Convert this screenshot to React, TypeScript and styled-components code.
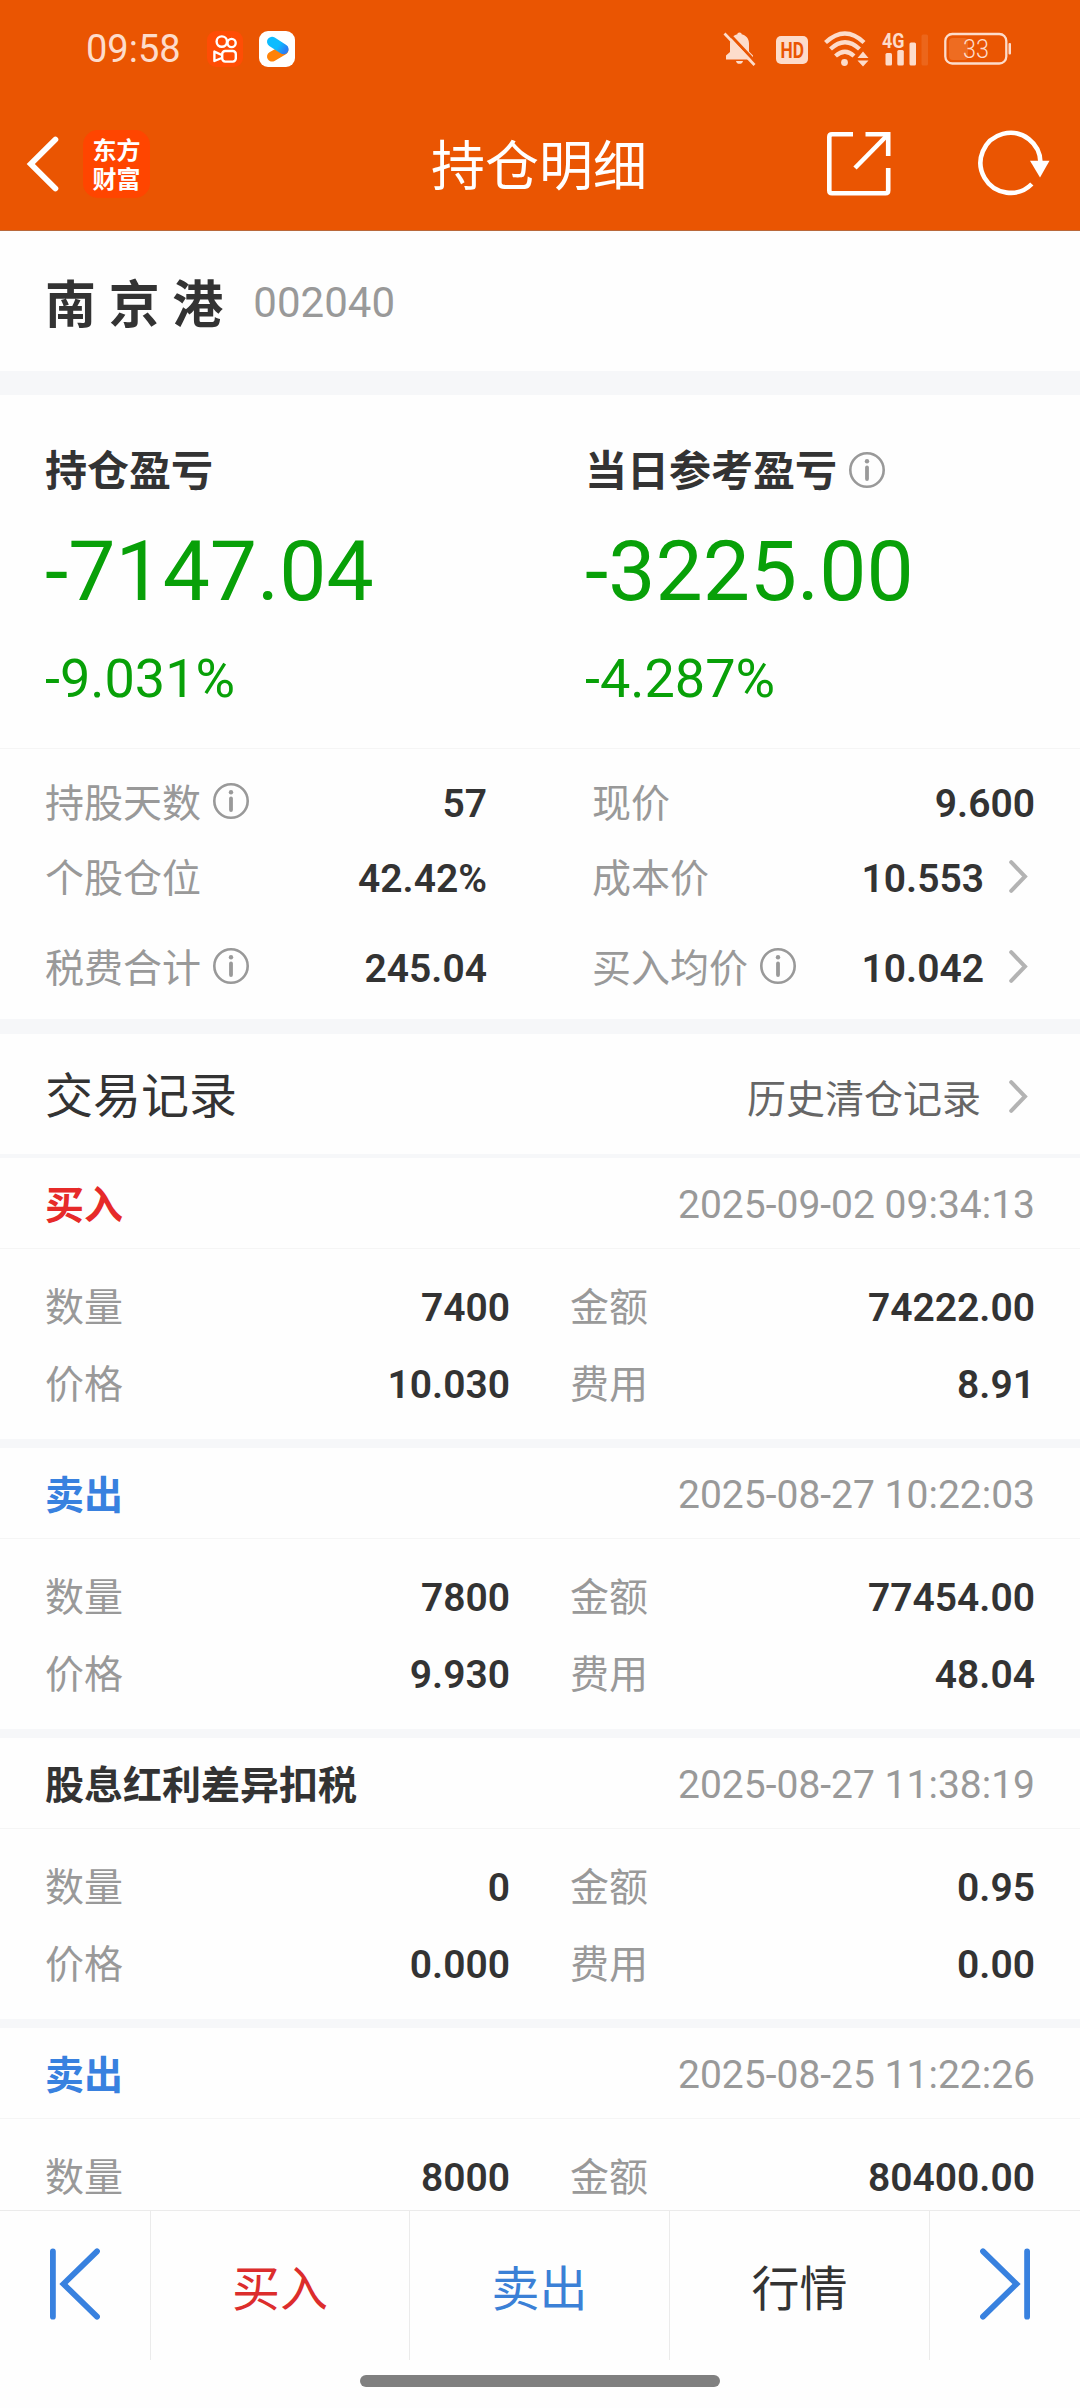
import React from "react";
import styled, { createGlobalStyle } from "styled-components";

const GlobalStyle = createGlobalStyle`
  * { box-sizing: border-box; }
  body { margin: 0; background: #fefefe; }
  svg { display: block; flex: none; overflow: visible; }
`;

const tint = "#fddccb";

const Page = styled.div`
  display: flex;
  flex-direction: column;
  width: 1080px;
  height: 2408px;
  overflow: hidden;
  background: #fefefe;
  color: #333;
  font-family: Roboto, "Noto Sans CJK SC", sans-serif;
  font-size: 39px;
  line-height: 1;
`;

const Header = styled.header`
  flex: none;
  height: 231px;
  background: #ea5502;
  border-bottom: 1px solid #b9683b;
`;

const StatusBar = styled.div`
  display: flex;
  align-items: center;
  justify-content: space-between;
  height: 97px;
  padding: 0 68px 0 86px;
  color: ${tint};
`;

const StatusGroup = styled.div`
  display: flex;
  align-items: center;
`;

const Clock = styled.span`
  width: 121px;
  font-size: 38px;
  line-height: 50px;
  padding-top: 1px;
`;

const AppIcon = styled.span<{ $bg: string }>`
  display: flex;
  width: 36px;
  height: 36px;
  margin-right: 16px;
  border-radius: 9px;
  overflow: hidden;
  background: ${(p) => p.$bg};
`;

const HdBadge = styled.span`
  margin: 2px 16px 0 20px;
`;

const NavBar = styled.nav`
  display: grid;
  grid-template-columns: 1fr auto 1fr;
  align-items: center;
  height: 134px;
  padding: 0 29px 0 27px;
  color: #fff;
`;

const NavSide = styled.div<{ $end?: boolean }>`
  display: flex;
  align-items: center;
  justify-content: ${(p) => (p.$end ? "flex-end" : "flex-start")};
  gap: ${(p) => (p.$end ? 87 : 25)}px;
`;

const BrandLogo = styled.span`
  width: 67px;
  height: 68px;
  padding-top: 4px;
  border-radius: 15px;
  background: #ff4500;
  font: 700 24px/29px "Noto Sans CJK SC", sans-serif;
  text-align: center;
`;

const PageTitle = styled.h1`
  margin: 0;
  padding-top: 8px;
  font-size: 54px;
  font-weight: 400;
  line-height: 70px;
`;

const StockBar = styled.section`
  display: flex;
  flex: none;
  align-items: center;
  height: 140px;
  padding: 4px 45px 0;
`;

const StockName = styled.strong`
  padding-top: 5px;
  font-size: 51px;
  line-height: 70px;
  white-space: pre;
`;

const StockCode = styled.span`
  margin-left: 30px;
  color: #999;
  font-size: 42px;
  line-height: 60px;
`;

const Band = styled.div<{ $h: number }>`
  flex: none;
  height: ${(p) => p.$h}px;
  background: #f6f7f9;
`;

const Summary = styled.section`
  display: grid;
  flex: none;
  grid-template-columns: 540px 1fr;
  height: 354px;
  padding: 47px 45px 0;
  border-bottom: 1px solid #f5f5f5;
`;

const SummaryLabel = styled.div`
  display: flex;
  align-items: center;
  gap: 12px;
  font-size: 42px;
  font-weight: 700;
  line-height: 60px;
`;

const BigFigure = styled.div`
  margin: 20px 0 27px;
  color: #08a008;
  font-size: 84px;
  line-height: 100px;
`;

const Percent = styled.div`
  color: #08a008;
  font-size: 54px;
  line-height: 60px;
`;

const Stats = styled.section`
  flex: none;
  height: 270px;
  padding: 17px 45px 0;
`;

const StatLine = styled.div<{ $gap?: number }>`
  display: grid;
  grid-template-columns: 442px 443px;
  justify-content: space-between;
  height: 75px;
  margin-top: ${(p) => p.$gap ?? 0}px;
`;

const PairLine = styled.div`
  display: grid;
  grid-template-columns: 465px 465px;
  justify-content: space-between;
  height: 77px;
`;

const Cell = styled.div`
  display: flex;
  align-items: center;
`;

const Label = styled.span`
  padding-top: 1px;
  color: #999;
  line-height: 60px;
`;

const Value = styled.strong`
  margin-left: auto;
  font-weight: 600;
  line-height: 60px;
`;

const InfoWrap = styled.span<{ $flush?: boolean }>`
  margin: 0 0 5px ${(p) => (p.$flush ? 0 : 12)}px;
`;

const ChevronWrap = styled.span<{ $wide?: boolean }>`
  margin: ${(p) => (p.$wide ? "1px 7px 0 28px" : "0 7px 4px 25px")};
`;

const RecordsHeader = styled.section`
  display: flex;
  flex: none;
  align-items: center;
  height: 124px;
  padding: 3px 45px 0;
  border-bottom: 4px solid #f6f7f9;
`;

const RecordsTitle = styled.h2`
  margin: 0;
  padding-top: 3px;
  font-size: 48px;
  font-weight: 400;
  line-height: 60px;
`;

const HistoryLink = styled.span`
  margin-left: auto;
  padding-top: 8px;
  color: #666;
  line-height: 60px;
`;

const Records = styled.main`
  flex: 1;
  min-height: 0;
  overflow: hidden;
`;

const Record = styled.article`
  height: 290px;
  border-bottom: 9px solid #f6f7f9;
`;

const RecordHead = styled.div`
  display: flex;
  align-items: center;
  justify-content: space-between;
  height: 91px;
  padding: 4px 45px 0;
  border-bottom: 1px solid #f5f5f5;
  line-height: 60px;
`;

const RecordKind = styled.strong<{ $color: string }>`
  padding-top: 2px;
  color: ${(p) => p.$color};
`;

const RecordTime = styled.time`
  color: #999;
`;

const RecordBody = styled.div`
  padding: 20px 45px 0;
`;

const BottomBar = styled.footer`
  display: grid;
  flex: none;
  grid-template-columns: 151px 259px 260px 260px 150px;
  height: 150px;
  border-top: 1px solid #ebebeb;
`;

const BarButton = styled.button<{ $color?: string }>`
  display: flex;
  align-items: center;
  justify-content: center;
  padding: 9px 0 0;
  border: 0;
  border-right: 1px solid #ebebeb;
  background: none;
  color: ${(p) => p.$color ?? "#333"};
  font: 400 48px/60px Roboto, "Noto Sans CJK SC", sans-serif;
  &:last-child { border-right: 0; }
`;

const StepButton = styled(BarButton)`
  padding: 0 0 4px;
`;

const HomeArea = styled.div`
  display: flex;
  flex: none;
  justify-content: center;
  height: 48px;
  padding-top: 15px;
`;

const HomePill = styled.span`
  width: 360px;
  height: 12px;
  border-radius: 6px;
  background: #808080;
`;

const Info = ({ flush }: { flush?: boolean }) => (
  <InfoWrap $flush={flush}>
    <svg width="36" height="36" viewBox="0 0 36 36" fill="none" stroke="#999">
      <circle cx="18" cy="18" r="16.7" strokeWidth="2.6" />
      <path d="M18 15.5V27" strokeWidth="3.8" strokeLinecap="round" />
      <circle cx="18" cy="9.3" r="2.2" fill="#999" stroke="none" />
    </svg>
  </InfoWrap>
);

const Chevron = ({ wide }: { wide?: boolean }) => (
  <ChevronWrap $wide={wide}>
    <svg width="19" height="33" viewBox="0 0 19 33" fill="none" stroke="#b3b3b3" strokeWidth="4" strokeLinecap="round">
      <path d="M2.2 2.2L16 16.5L2.2 30.8" />
    </svg>
  </ChevronWrap>
);

const KuaishouIcon = () => (
  <AppIcon $bg="#ff4d05">
    <svg width="36" height="36" viewBox="0 0 36 36" fill="none" stroke="#fff" strokeWidth="2.4" strokeLinejoin="round">
      <circle cx="14.8" cy="10.6" r="5.2" />
      <circle cx="24.6" cy="12" r="4.1" />
      <rect x="15.2" y="20" width="13.6" height="10.6" rx="3" />
      <path d="M14.8 24L7.4 20.6V30L14.8 27" />
    </svg>
  </AppIcon>
);

const YoukuIcon = () => (
  <AppIcon $bg="#fff">
    <svg width="36" height="36" viewBox="0 0 36 36" fill="none" strokeWidth="10" strokeLinecap="round">
      <defs>
        <linearGradient id="blue" x1="12" y1="10" x2="26" y2="20" gradientUnits="userSpaceOnUse">
          <stop offset="0.5" stopColor="#0dbcff" />
          <stop offset="1" stopColor="#2a80f5" />
        </linearGradient>
      </defs>
      <path d="M13 25.6L24.4 19" stroke="#ff8208" />
      <path d="M13 10.8L24.6 18.3" stroke="url(#blue)" />
    </svg>
  </AppIcon>
);

const BellOff = () => (
  <svg width="33" height="36" viewBox="0 0 33 36">
    <path
      d="M16.5 1.5C18 1.5 18.6 2.3 18.6 3.3C23.3 4.4 26 7.8 26 12.5V20.5L30 24.5V28.5H3V24.5L7 21V12.5C7 7.8 10 4.3 14.4 3.3C14.4 2.3 15 1.5 16.5 1.5ZM13 30H20C19.5 33.8 13.500 33.800 13 30Z"
      fill={tint}
    />
    <path d="M3.5 0L33 31.5" stroke="#ea5502" strokeWidth="3" />
    <path d="M1.5 2.500L31.500 34" stroke={tint} strokeWidth="2.700" />
  </svg>
);

const Hd = () => (
  <HdBadge>
    <svg width="32" height="28" viewBox="0 0 32 28">
      <rect width="32" height="28" rx="5" fill={tint} />
      <text x="4.5" y="21.800" fontFamily="Roboto, sans-serif" fontSize="22" fontWeight="700" fill="#ea5502" textLength="23.500" lengthAdjust="spacingAndGlyphs">
        HD
      </text>
    </svg>
  </HdBadge>
);

const Wifi = () => (
  <svg width="45" height="36" viewBox="0 0 45 36" fill="none" stroke={tint} strokeWidth="4.300">
    <path d="M1.500 11.500Q21 -6.500 40 11.500" />
    <path d="M6.500 18Q21 4.500 35.500 18" />
    <path d="M11.500 25Q21 16.500 30 25" />
    <circle cx="20.500" cy="31.500" r="3.400" fill={tint} stroke="none" />
    <path d="M39 20.500L44.500 27H33.500ZM39 35.500L44.500 29.500H33.500Z" fill={tint} stroke="none" />
  </svg>
);

const Signal = () => (
  <svg width="48" height="36" viewBox="0 0 48 36" fill={tint}>
    <text x="0" y="16.500" fontFamily="Roboto, sans-serif" fontSize="21" fontWeight="700" textLength="22.500" lengthAdjust="spacingAndGlyphs">
      4G
    </text>
    <rect x="3.500" y="22" width="6.500" height="12.500" rx="1.500" />
    <rect x="15.300" y="19" width="6.500" height="15.500" rx="1.500" />
    <rect x="27.500" y="11.500" width="6.500" height="23" rx="1.500" />
    <rect x="39.500" y="3.500" width="6.500" height="31" rx="1.500" opacity="0.130" />
  </svg>
);

const Battery = () => (
  <svg width="68" height="34" viewBox="0 0 68 34" fill="none">
    <rect x="5" y="6" width="19" height="22" rx="4" fill="#f0762f" opacity="0.700" />
    <rect x="1.300" y="2" width="61" height="29.500" rx="7" stroke={tint} strokeWidth="2.300" />
    <rect x="64.500" y="11" width="2.500" height="11.500" rx="1" fill={tint} />
    <text x="32" y="25.500" textAnchor="middle" fontFamily="Roboto, sans-serif" fontSize="25" fontWeight="300" fill={tint} textLength="26" lengthAdjust="spacingAndGlyphs">
      33
    </text>
  </svg>
);

const BackIcon = () => (
  <svg width="31" height="56" viewBox="0 0 31 56" fill="none" stroke="#fff" strokeWidth="5.800" strokeLinecap="round">
    <path d="M28.400 3.500L3.800 28L28.400 52.500" />
  </svg>
);

const ExportIcon = () => (
  <svg width="64" height="66" viewBox="0 0 64 66" fill="none" stroke="#fff" strokeWidth="4.600">
    <path d="M26 3.300H5Q2.300 3.300 2.300 6V59.500Q2.300 62.200 5 62.200H58.500Q61.200 62.200 61.200 59.500V37" />
    <path d="M38.500 3.300H61.200V25" />
    <path d="M60.500 4L28 37" />
  </svg>
);

const RefreshIcon = () => (
  <svg width="73" height="66" viewBox="0 0 73 66" fill="none">
    <path d="M53.800 53A30 30 0 1 1 62.500 32" stroke="#fff" strokeWidth="4.600" />
    <path d="M52 29.800H71.500L62 46.500Z" fill="#fff" />
  </svg>
);

const StepIcon = ({ next }: { next?: boolean }) => (
  <svg width="50" height="72" viewBox="0 0 50 72" fill="none" stroke="#3881df" strokeWidth="5.800" strokeLinecap="round">
    <path d={next ? "M47.100 3.300V68.700M3 3.300L36.500 36L3 68.700" : "M2.900 3.300V68.700M47 3.300L13.500 36L47 68.700"} />
  </svg>
);

type CellData = { label: string; value: string; info?: boolean; more?: boolean };

const DataCell = ({ label, value, info, more }: CellData) => (
  <Cell>
    <Label>{label}</Label>
    {info && <Info />}
    <Value>{value}</Value>
    {more && <Chevron />}
  </Cell>
);

const stats: CellData[][] = [
  [{ label: "持股天数", value: "57", info: true }, { label: "现价", value: "9.600" }],
  [{ label: "个股仓位", value: "42.42%" }, { label: "成本价", value: "10.553", more: true }],
  [{ label: "税费合计", value: "245.04", info: true }, { label: "买入均价", value: "10.042", info: true, more: true }],
];

const records = [
  { kind: "买入", color: "#e62a29", time: "2025-09-02 09:34:13", qty: "7400", amount: "74222.00", price: "10.030", fee: "8.91" },
  { kind: "卖出", color: "#3881df", time: "2025-08-27 10:22:03", qty: "7800", amount: "77454.00", price: "9.930", fee: "48.04" },
  { kind: "股息红利差异扣税", color: "#333", time: "2025-08-27 11:38:19", qty: "0", amount: "0.95", price: "0.000", fee: "0.00" },
  { kind: "卖出", color: "#3881df", time: "2025-08-25 11:22:26", qty: "8000", amount: "80400.00" },
];

export default function App() {
  return (
    <Page>
      <GlobalStyle />
      <Header>
        <StatusBar>
          <StatusGroup>
            <Clock>09:58</Clock>
            <KuaishouIcon />
            <YoukuIcon />
          </StatusGroup>
          <StatusGroup>
            <BellOff />
            <Hd />
            <Wifi />
            <span style={{ width: 13 }} />
            <Signal />
            <span style={{ width: 14 }} />
            <Battery />
          </StatusGroup>
        </StatusBar>
        <NavBar>
          <NavSide>
            <BackIcon />
            <BrandLogo>
              东方
              <br />
              财富
            </BrandLogo>
          </NavSide>
          <PageTitle>持仓明细</PageTitle>
          <NavSide $end>
            <ExportIcon />
            <RefreshIcon />
          </NavSide>
        </NavBar>
      </Header>
      <StockBar>
        <StockName>南 京 港</StockName>
        <StockCode>002040</StockCode>
      </StockBar>
      <Band $h={24} />
      <Summary>
        <div>
          <SummaryLabel>持仓盈亏</SummaryLabel>
          <BigFigure>-7147.04</BigFigure>
          <Percent>-9.031%</Percent>
        </div>
        <div>
          <SummaryLabel>
            当日参考盈亏
            <Info flush />
          </SummaryLabel>
          <BigFigure>-3225.00</BigFigure>
          <Percent>-4.287%</Percent>
        </div>
      </Summary>
      <Stats>
        {stats.map((line, i) => (
          <StatLine key={i} $gap={i === 2 ? 15 : 0}>
            {line.map((c) => (
              <DataCell key={c.label} {...c} />
            ))}
          </StatLine>
        ))}
      </Stats>
      <Band $h={15} />
      <RecordsHeader>
        <RecordsTitle>交易记录</RecordsTitle>
        <HistoryLink>历史清仓记录</HistoryLink>
        <Chevron wide />
      </RecordsHeader>
      <Records>
        {records.map((r) => (
          <Record key={r.time}>
            <RecordHead>
              <RecordKind $color={r.color}>{r.kind}</RecordKind>
              <RecordTime>{r.time}</RecordTime>
            </RecordHead>
            <RecordBody>
              <PairLine>
                <DataCell label="数量" value={r.qty} />
                <DataCell label="金额" value={r.amount} />
              </PairLine>
              {r.price && r.fee && (
                <PairLine>
                  <DataCell label="价格" value={r.price} />
                  <DataCell label="费用" value={r.fee} />
                </PairLine>
              )}
            </RecordBody>
          </Record>
        ))}
      </Records>
      <BottomBar>
        <StepButton>
          <StepIcon />
        </StepButton>
        <BarButton $color="#dc2d2c">买入</BarButton>
        <BarButton $color="#3b80d6">卖出</BarButton>
        <BarButton>行情</BarButton>
        <StepButton>
          <StepIcon next />
        </StepButton>
      </BottomBar>
      <HomeArea>
        <HomePill />
      </HomeArea>
    </Page>
  );
}
